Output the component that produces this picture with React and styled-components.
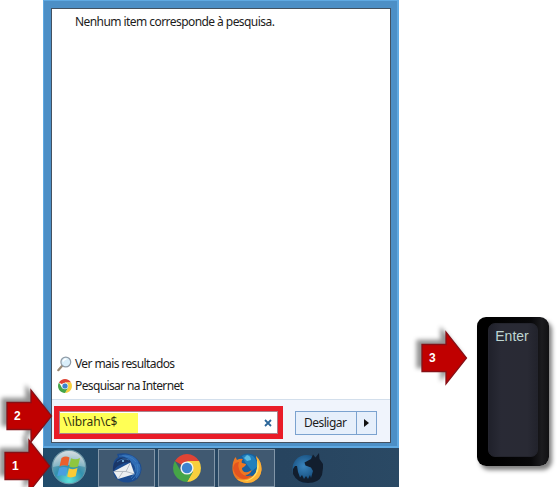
import React from "react";
import styled, { createGlobalStyle } from "styled-components";

const Global = createGlobalStyle`
  body { margin: 0; background: #fff; overflow: hidden; }
  * { box-sizing: border-box; }
`;

const Page = styled.div`
  position: relative;
  width: 558px;
  height: 487px;
  display: flex;
  align-items: flex-start;
  padding-left: 43px;
  overflow: hidden;
  font-family: "Noto Sans", "Open Sans", sans-serif;
  font-size: 12px;
  color: #1c1c1c;
`;

const Desktop = styled.main`
  width: 356px;
  height: 487px;
  display: flex;
  flex-direction: column;
`;

const MenuFrame = styled.section`
  height: 448px;
  padding: 7px 6px 4px 7px;
  background: #4c8fc6;
  border: 1px solid #5fa9e2;
  border-width: 1px 2px 2px 1px;
`;

const Menu = styled.div`
  height: 435px;
  display: flex;
  flex-direction: column;
  background: #fff;
  border: 1px solid #435160;
`;

const Results = styled.div`
  flex: 1;
  padding: 4px 0 0 23px;
`;

const Label = styled.span`
  display: inline-block;
  white-space: nowrap;
  line-height: 18px;
  letter-spacing: ${(p) => p.$track || 0}px;
`;

const Links = styled.div`
  padding-left: 5px;
  height: 46px;
`;

const LinkRow = styled.div`
  display: flex;
  align-items: center;
  gap: 3px;
  height: 22px;
  svg { flex: none; }
`;

const LinkIcon = styled.span`
  width: 15px;
  display: grid;
  place-items: center;
`;

const Footer = styled.footer`
  height: 43px;
  display: flex;
  align-items: flex-start;
  padding: 6px 0 0 2px;
  background: #f0f4fc;
  border-top: 1px solid #d3dfec;
`;

const Search = styled.div`
  width: 229px;
  height: 33px;
  display: flex;
  align-items: center;
  justify-content: space-between;
  padding: 0 6px 0 0;
  background: #fff;
  border: 5px solid #e91c28;
  box-shadow: inset 0 0 0 1px #a9838d;
`;

const Query = styled.span`
  width: 78px;
  height: 20px;
  margin: 1px 0 0 1px;
  padding-left: 3px;
  line-height: 18px;
  background: #ffff55;
  color: #33330f;
  letter-spacing: -0.1px;
`;

const SplitButton = styled.div`
  display: flex;
  width: 82px;
  height: 24px;
  margin: 5px 0 0 12px;
  border: 1px solid #7ba2cf;
  background: #e6effb;
`;

const ButtonText = styled.div`
  width: 61px;
  padding-left: 8px;
  line-height: 22px;
  border-right: 1px solid #7ba2cf;
  letter-spacing: -0.5px;
`;

const ButtonArrow = styled.div`
  flex: 1;
  display: grid;
  place-items: center;
`;

const Taskbar = styled.nav`
  height: 39px;
  display: flex;
  gap: 3px;
  padding: 1px 0 0 55px;
  background: linear-gradient(90deg, #214c6b 0, #254a68 50px, #27445f 240px, #2a4964 100%);
`;

const Task = styled.div`
  width: 57px;
  height: 38px;
  display: grid;
  place-items: center;
  border: 1px solid ${(p) => (p.$open ? "#8296a8" : "transparent")};
  background: ${(p) => (p.$open ? "#405971" : "transparent")};
`;

const Orb = styled.div`
  position: absolute;
  left: 51px;
  top: 449px;
  width: 36px;
  height: 36px;
`;

const Key = styled.aside`
  width: 72px;
  height: 149px;
  margin: 317px 0 0 78px;
  padding: 6px 11px 9px 11px;
  border-radius: 9px;
  background: linear-gradient(90deg, #000 0 20%, #08080a 75%, #1b1b1e 90%, #111113 100%);
  box-shadow: 3px 4px 4px rgba(0, 0, 0, 0.5);
`;

const KeyTop = styled.div`
  height: 134px;
  border-radius: 7px;
  border: 1px solid #23242d;
  background: linear-gradient(90deg, #20212b, #292a35 25%, #292a34 80%, #22232c);
  color: #bfd6d2;
  font: 14px/25px "Liberation Sans", Arial, sans-serif;
  text-align: center;
  padding-right: 2px;
`;

const Callout = styled.div`
  position: absolute;
  left: ${(p) => p.$x}px;
  top: ${(p) => p.$y}px;
  width: 47px;
  height: 54px;
  color: #fff;
  font: bold 12px/54px "Liberation Sans", Arial, sans-serif;
  padding-left: 8px;
  svg { position: absolute; left: 0; top: 0; overflow: visible; filter: drop-shadow(-5px -4px 2px rgba(0, 0, 0, 0.42)); }
  span { position: relative; }
`;

function Arrow({ x, y, n }) {
  return (
    <Callout $x={x} $y={y}>
      <svg width="47" height="54">
        <path d="M1 13.5H25V1L45.5 27 25 53V40.5H1Z" fill="#c00000" stroke="#861016" strokeWidth="1.3" />
      </svg>
      <span>{n}</span>
    </Callout>
  );
}

function Chrome({ size }) {
  return (
    <svg width={size} height={size} viewBox="0 0 28 28">
      <path d="M14 14 1.9 7A14 14 0 0 1 26.1 7H14Z" fill="#e04435" />
      <path d="M14 7H26.1A14 14 0 0 1 14 28L20 17.5Z" fill="#f7cf3e" />
      <path d="M1.9 7A14 14 0 0 0 14 28L20 17.5 14 20 8 17.5Z" fill="#45a547" />
      <circle cx="14" cy="14" r="6.6" fill="#f1f5f2" />
      <circle cx="14" cy="14" r="5.2" fill="#3b83ce" />
    </svg>
  );
}

function Magnifier() {
  return (
    <svg width="15" height="16" viewBox="0 0 15 16">
      <path d="M5 10 1.3 14.2" stroke="#9b8a76" strokeWidth="2.2" strokeLinecap="round" />
      <circle cx="8.8" cy="6" r="4.9" fill="#d9eefa" stroke="#8f9ba6" strokeWidth="1.2" />
      <path d="M6 5.5Q7 3 9.5 3" stroke="#fff" strokeWidth="1.4" fill="none" />
    </svg>
  );
}

function StartOrb() {
  return (
    <svg width="36" height="36" viewBox="0 0 36 36">
      <defs>
        <radialGradient id="orb" cx=".5" cy=".9" r=".85">
          <stop offset="0" stopColor="#5fe0d8" />
          <stop offset=".5" stopColor="#3391ae" />
          <stop offset="1" stopColor="#8fa9b4" />
        </radialGradient>
        <linearGradient id="gloss" x2="0" y2="1">
          <stop stopColor="#fff" stopOpacity=".6" />
          <stop offset="1" stopColor="#fff" stopOpacity=".25" />
        </linearGradient>
      </defs>
      <circle cx="18" cy="18" r="16.8" fill="url(#orb)" stroke="#6b98a8" />
      <path d="M2 18A16 16 0 0 1 34 18Q18 14 2 18Z" fill="url(#gloss)" />
      <path d="M10.5 9Q14.5 6.500 18.500 8.500L16.800 17Q12.500 15.500 8.500 17.500Z" fill="#ea5f2c" />
      <path d="M20 9.300Q24.500 11.500 29 9L27 17.500Q22.500 19.500 18.200 17.500Z" fill="#8ec63f" />
      <path d="M8.200 19Q12.500 17 16.500 18.700L14.800 27Q10.500 25.500 6.300 27.300Z" fill="#4a9fe0" />
      <path d="M17.900 19.200Q22 21.200 26.500 19L24.700 27.300Q20 29.500 16.200 27.500Z" fill="#fbcb35" />
    </svg>
  );
}

function Thunderbird() {
  return (
    <svg width="32" height="32" viewBox="0 0 32 32">
      <path d="M2 15Q2 8 7 5L6 2Q18-1 26 7Q31 12 30.500 18Q29 29 18 30.500Q9 31 4 25Q1 20 2 15Z" fill="#1c4c90" />
      <path d="M10 3Q21 1 27 9Q31 18 25 26Q27 16 21 11Q17 6 10 3Z" fill="#2f6cb4" />
      <path d="M2.500 19.500 19.500 10.500 23.500 22 7 27Z" fill="#eceff1" />
      <path d="M2.500 19.500 15 19.500 19.500 10.500M7 27 12 19.500M23.500 22 15 19.500" fill="none" stroke="#a9b0b9" strokeWidth=".8" />
      <path d="M2 20Q1 9 9 6Q18 5 20 10.500Q14 9.500 9 13Q5 14 2 20Z" fill="#1a3667" />
      <path d="M6 10Q12 5 18 8M8 4Q20 3 25 10M26 12Q29 21 21 28M24 13Q26 20 20 26M28 12Q31 20 25 26" fill="none" stroke="#4283c4" strokeWidth=".7" />
      <circle cx="12" cy="9" r="1" fill="#8fd0f4" />
    </svg>
  );
}

function Firefox() {
  return (
    <svg width="30" height="30" viewBox="0 0 30 30">
      <circle cx="16" cy="13.500" r="13" fill="#17609f" />
      <path d="M10 3Q16 0 21 3Q26 8 25 14L20 18 13 9Z" fill="#2380bd" />
      <path d="M15 2Q19 3 19 7L15 8 12 5Z" fill="#5bbce2" />
      <path d="M24 3Q30 9 29.500 17Q28 29 15 30Q2 29 .5 17Q0 9 3.500 4L5 7Q8 5 11 6Q9 8 10 10L14 11Q14 13 10 15Q10 20 16 19L20 17Q18 22 13 22Q19 26 24 20Q27 13 24 3Z" fill="#ee7722" />
      <path d="M24 3Q30 9 29.500 17Q28 29 15 30Q8 29 5 26Q18 29 24 20Q27 13 24 3Z" fill="#fbb236" />
      <path d="M25 6Q29 15 24 22Q19 28 12 28Q20 27 24 19Q26 13 25 6Z" fill="#ffe36a" />
      <path d="M1 15Q2 9 7 9Q5 14 9 20Q14 25 19 22Q15 28 8 25Q2 22 1 15Z" fill="#e4541f" />
    </svg>
  );
}

function Wolf() {
  return (
    <svg width="32" height="32" viewBox="0 0 32 32">
      <defs>
        <radialGradient id="moon" cx=".4" cy=".4">
          <stop stopColor="#3984bd" />
          <stop offset="1" stopColor="#174f7f" />
        </radialGradient>
      </defs>
      <circle cx="15.500" cy="17" r="14" fill="url(#moon)" />
      <path d="M13.500 10.500 20 7 22 2.500 24.500 5.500 28 1 28.500 7 32 12V16L31 23Q28 31 17 31Q6 31 2 22L2 17 4 14 6 14 7 20 9 25.500 11 23 13 27 15 24 17 27 19 23 20 26 22 19 20 15.500 14.500 13.500Z" fill="#121e2e" />
    </svg>
  );
}

export default function App() {
  return (
    <>
      <Global />
      <Page>
        <Desktop>
          <MenuFrame>
            <Menu>
              <Results><Label $track={-0.56}>Nenhum item corresponde à pesquisa.</Label></Results>
              <Links>
                <LinkRow><LinkIcon><Magnifier /></LinkIcon><Label $track={-0.6}>Ver mais resultados</Label></LinkRow>
                <LinkRow><LinkIcon><Chrome size={14} /></LinkIcon><Label $track={-0.63}>Pesquisar na Internet</Label></LinkRow>
              </Links>
              <Footer>
                <Search>
                  <Query>\\ibrah\c$</Query>
                  <svg width="8" height="8" viewBox="0 0 8 8"><path d="M1 1 7 7M7 1 1 7" stroke="#2b6699" strokeWidth="1.8" /></svg>
                </Search>
                <SplitButton>
                  <ButtonText>Desligar</ButtonText>
                  <ButtonArrow><svg width="5" height="8"><path d="M0 0 5 4 0 8Z" fill="#111" /></svg></ButtonArrow>
                </SplitButton>
              </Footer>
            </Menu>
          </MenuFrame>
          <Taskbar>
            <Task $open><Thunderbird /></Task>
            <Task $open><Chrome size={28} /></Task>
            <Task $open><Firefox /></Task>
            <Task><Wolf /></Task>
          </Taskbar>
        </Desktop>
        <Key><KeyTop>Enter</KeyTop></Key>
        <Orb><StartOrb /></Orb>
        <Arrow x={4} y={439} n="1" />
        <Arrow x={6} y={389} n="2" />
        <Arrow x={421} y={331} n="3" />
      </Page>
    </>
  );
}
